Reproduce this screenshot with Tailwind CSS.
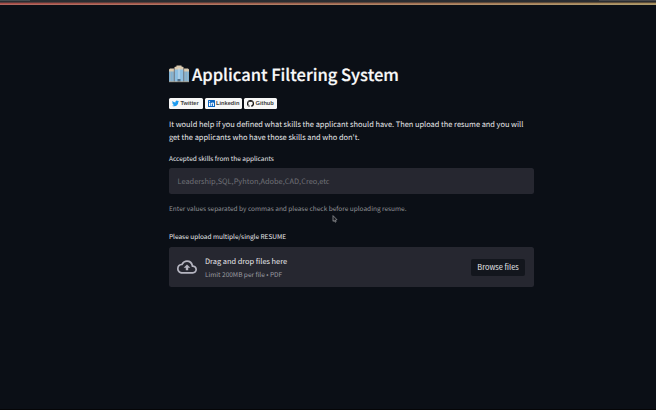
<!DOCTYPE html>
<html lang="en"><head><meta charset="utf-8"><title>Applicant Filtering System</title>
<script src="https://cdn.jsdelivr.net/npm/@tailwindcss/browser@4"></script></head>
<body class="bg-[#0b0f16] text-[#e8e9eb] h-[410px] overflow-hidden font-['Noto_Sans_CJK_JP','Noto_Sans',sans-serif] flex flex-col [text-rendering:geometricPrecision]">
<header class="shrink-0">
  <div class="h-[2px] flex bg-[#2b2d31]"><div class="w-[30px] h-px bg-[#454c50]"></div><div class="grow"></div><div class="w-[57px] h-px bg-[#48484a]"></div></div>
  <div class="h-px bg-linear-to-r from-[#5a3b3d] to-[#5b4e3b]"></div>
  <div class="h-px bg-linear-to-r from-[#a84a45] via-[#a0644f] to-[#a88f5c]"></div>
  <div class="h-px bg-linear-to-r from-[#ae6860] via-[#ad8265] to-[#ad9c70]"></div>
</header>
<main class="w-[365px] ml-[169px] pt-[57px] flex flex-col grow">
  <h1 class="flex items-center h-6 text-[16.54px] leading-6 font-medium text-[#fafafa] whitespace-nowrap [-webkit-text-stroke:0.2px_#fafafa]">
    <svg class="w-5 h-5 mr-[3px] shrink-0" viewBox="0 0 20 20">
      <path d="M0 6h6v12H0zM14 6h6v12h-6z" fill="#7fb0d2"/>
      <path d="M5.500 4.500h9V18h-9z" fill="#8dbfe2"/>
      <path d="M0 5.500l1-1h4.500v3H0zM14.500 4.500H19l1 1v2h-5.500zM5.500 3l2-.6V1.400h5v1l2 .6v2.500h-9z" fill="#dccbb0"/>
      <path d="M1.600 7v11M4 7v11M16 7v11M18.400 7v11" stroke="#c3bdb3" stroke-width=".4"/>
      <path d="M5.300 4v14M14.700 4v14" stroke="#675f60" stroke-width=".7"/>
      <path d="M9.500 4h1v14h-1z" fill="#c7dcea"/>
      <path d="M8.500 15h3v3h-3z" fill="#4f6f8a"/>
      <path d="M0 17.400h20v.8H0z" fill="#a79985"/>
    </svg>
    <span>Applicant Filtering System</span>
  </h1>
  <div class="flex gap-[2px] mt-[12px] h-[11px] font-['Liberation_Sans',sans-serif] font-bold text-[5.7px] leading-[11px] text-[#444]">
    <a class="w-[34px] h-[11px] rounded-[1.5px] bg-[#f7f7f7] flex items-center pl-[3px] gap-[1.500px]">
      <svg class="w-[7px] h-[7px] shrink-0" viewBox="0 0 24 24" fill="#1d9bf0"><path d="M23.950 4.570a10 10 0 01-2.820.770 4.960 4.960 0 002.160-2.720c-.950.560-2 .960-3.130 1.180a4.920 4.920 0 00-8.380 4.480C7.690 8.090 4.070 6.130 1.640 3.160a4.820 4.820 0 00-.670 2.480c0 1.710.870 3.210 2.190 4.100a4.900 4.900 0 01-2.230-.620v.060a4.920 4.920 0 003.950 4.830 5 5 0 01-2.210.080 4.940 4.940 0 004.600 3.420A9.870 9.870 0 010 19.540a14 14 0 007.550 2.210c9.050 0 14-7.500 14-13.980 0-.210 0-.420-.020-.630a9.940 9.940 0 002.460-2.550z"/></svg>
      <span class="pt-[2px]">Twitter</span></a>
    <a class="w-[37px] h-[11px] rounded-[1.5px] bg-[#f7f7f7] flex items-center pl-[2.500px] gap-[1.500px]">
      <svg class="w-[7px] h-[7px] shrink-0" viewBox="0 0 24 24"><rect width="24" height="24" rx="2" fill="#0a66c2"/><path d="M3.600 9h3.500v11.400H3.600zM9.300 9h3.400v1.600c.7-1.200 2-1.900 3.400-1.900 3.600 0 4.300 2.400 4.300 5.400v6.300h-3.600v-5.600c0-1.300 0-3-1.800-3s-2.100 1.400-2.100 2.900v5.700H9.300z" fill="#fff"/><circle cx="5.350" cy="5.400" r="2.100" fill="#fff"/></svg>
      <span class="pt-[2px]">Linkedin</span></a>
    <a class="w-[33px] h-[11px] rounded-[1.5px] bg-[#f7f7f7] flex items-center pl-[3px] gap-[1.500px]">
      <svg class="w-[7px] h-[7px] shrink-0" viewBox="0 0 24 24" fill="#181717"><path d="M12 .3a12 12 0 00-3.800 23.400c.6.100.8-.3.800-.6v-2c-3.300.700-4-1.600-4-1.600-.600-1.400-1.400-1.800-1.400-1.800-1-.700.100-.700.100-.700 1.200 0 1.900 1.200 1.900 1.200 1 1.800 2.800 1.300 3.500 1 0-.8.400-1.300.7-1.600-2.700-.3-5.500-1.300-5.500-6 0-1.200.5-2.300 1.300-3.100-.2-.4-.6-1.600 0-3.200 0 0 1-.3 3.400 1.200a11.500 11.500 0 016 0c2.300-1.500 3.300-1.200 3.300-1.200.6 1.600.2 2.800.1 3.200.8.800 1.300 1.900 1.300 3.200 0 4.600-2.800 5.600-5.500 5.900.5.400.9 1 .9 2.200v3.300c0 .3.100.7.800.6A12 12 0 0012 .3"/></svg>
      <span class="pt-[2px]">Github</span></a>
  </div>
  <p class="mt-[9px] text-[7.430px] leading-[13px] whitespace-nowrap">It would help if you defined what skills the applicant should have. Then upload the resume and you will<br>get the applicants who have those skills and who don't.</p>
  <label class="mt-[9px] h-[10px] text-[6.500px] leading-[10px]">Accepted skills from the applicants</label>
  <div class="mt-[5px] h-[26px] rounded-[2.500px] bg-[#262730] pl-[8.500px] text-[7.420px] leading-[28px] text-[#707177]">Leadership,SQL,Pyhton,Adobe,CAD,Creo,etc</div>
  <p class="mt-[9px] h-[10px] text-[6.500px] leading-[10px] text-[#909195]">Enter values separated by commas and please check before uploading resume.</p>
  <label class="mt-[18px] h-[10px] text-[6.500px] leading-[10px]">Please upload multiple/single RESUME</label>
  <section class="mt-[6px] h-[40px] rounded-[2.500px] bg-[#262730] flex items-center pl-[8px] pr-[9px]">
    <svg class="w-5 h-5 shrink-0" viewBox="0 0 24 24" fill="#b5b5c0"><path d="M19.350 10.040A7.490 7.490 0 0012 4C9.110 4 6.600 5.640 5.350 8.040A5.994 5.994 0 000 14c0 3.310 2.690 6 6 6h13c2.760 0 5-2.240 5-5 0-2.640-2.050-4.780-4.650-4.960zM19 18H6c-2.210 0-4-1.790-4-4 0-2.050 1.530-3.760 3.560-3.970l1.070-.110.500-.950A5.469 5.469 0 0112 6c2.620 0 4.880 1.860 5.390 4.430l.300 1.500 1.530.110A2.980 2.980 0 0122 15c0 1.650-1.350 3-3 3zM8 13h2.550v3h2.900v-3H16l-4-4z"/></svg>
    <div class="ml-2 grow whitespace-nowrap"><div class="text-[7.420px] leading-[13px]">Drag and drop files here</div><div class="text-[6.500px] leading-[12px] text-[#9b9ca1]">Limit 200MB per file • PDF</div></div>
    <button class="w-[54px] h-[17px] rounded-[2px] bg-[#13161d] text-[7.420px] leading-[16px] pb-px whitespace-nowrap">Browse files</button>
  </section>
</main>
<footer class="h-px shrink-0 bg-[#050507]"></footer>
<svg class="absolute left-[331.5px] top-[215px] w-[6px] h-[8px]" viewBox="0 0 6 8"><path d="M1 .6v5.700l1.300-.900.8 1.800 1-.5-.7-1.600 1.600-.4z" fill="#17181d" stroke="#a5a6a9" stroke-width=".7"/></svg>
</body></html>
